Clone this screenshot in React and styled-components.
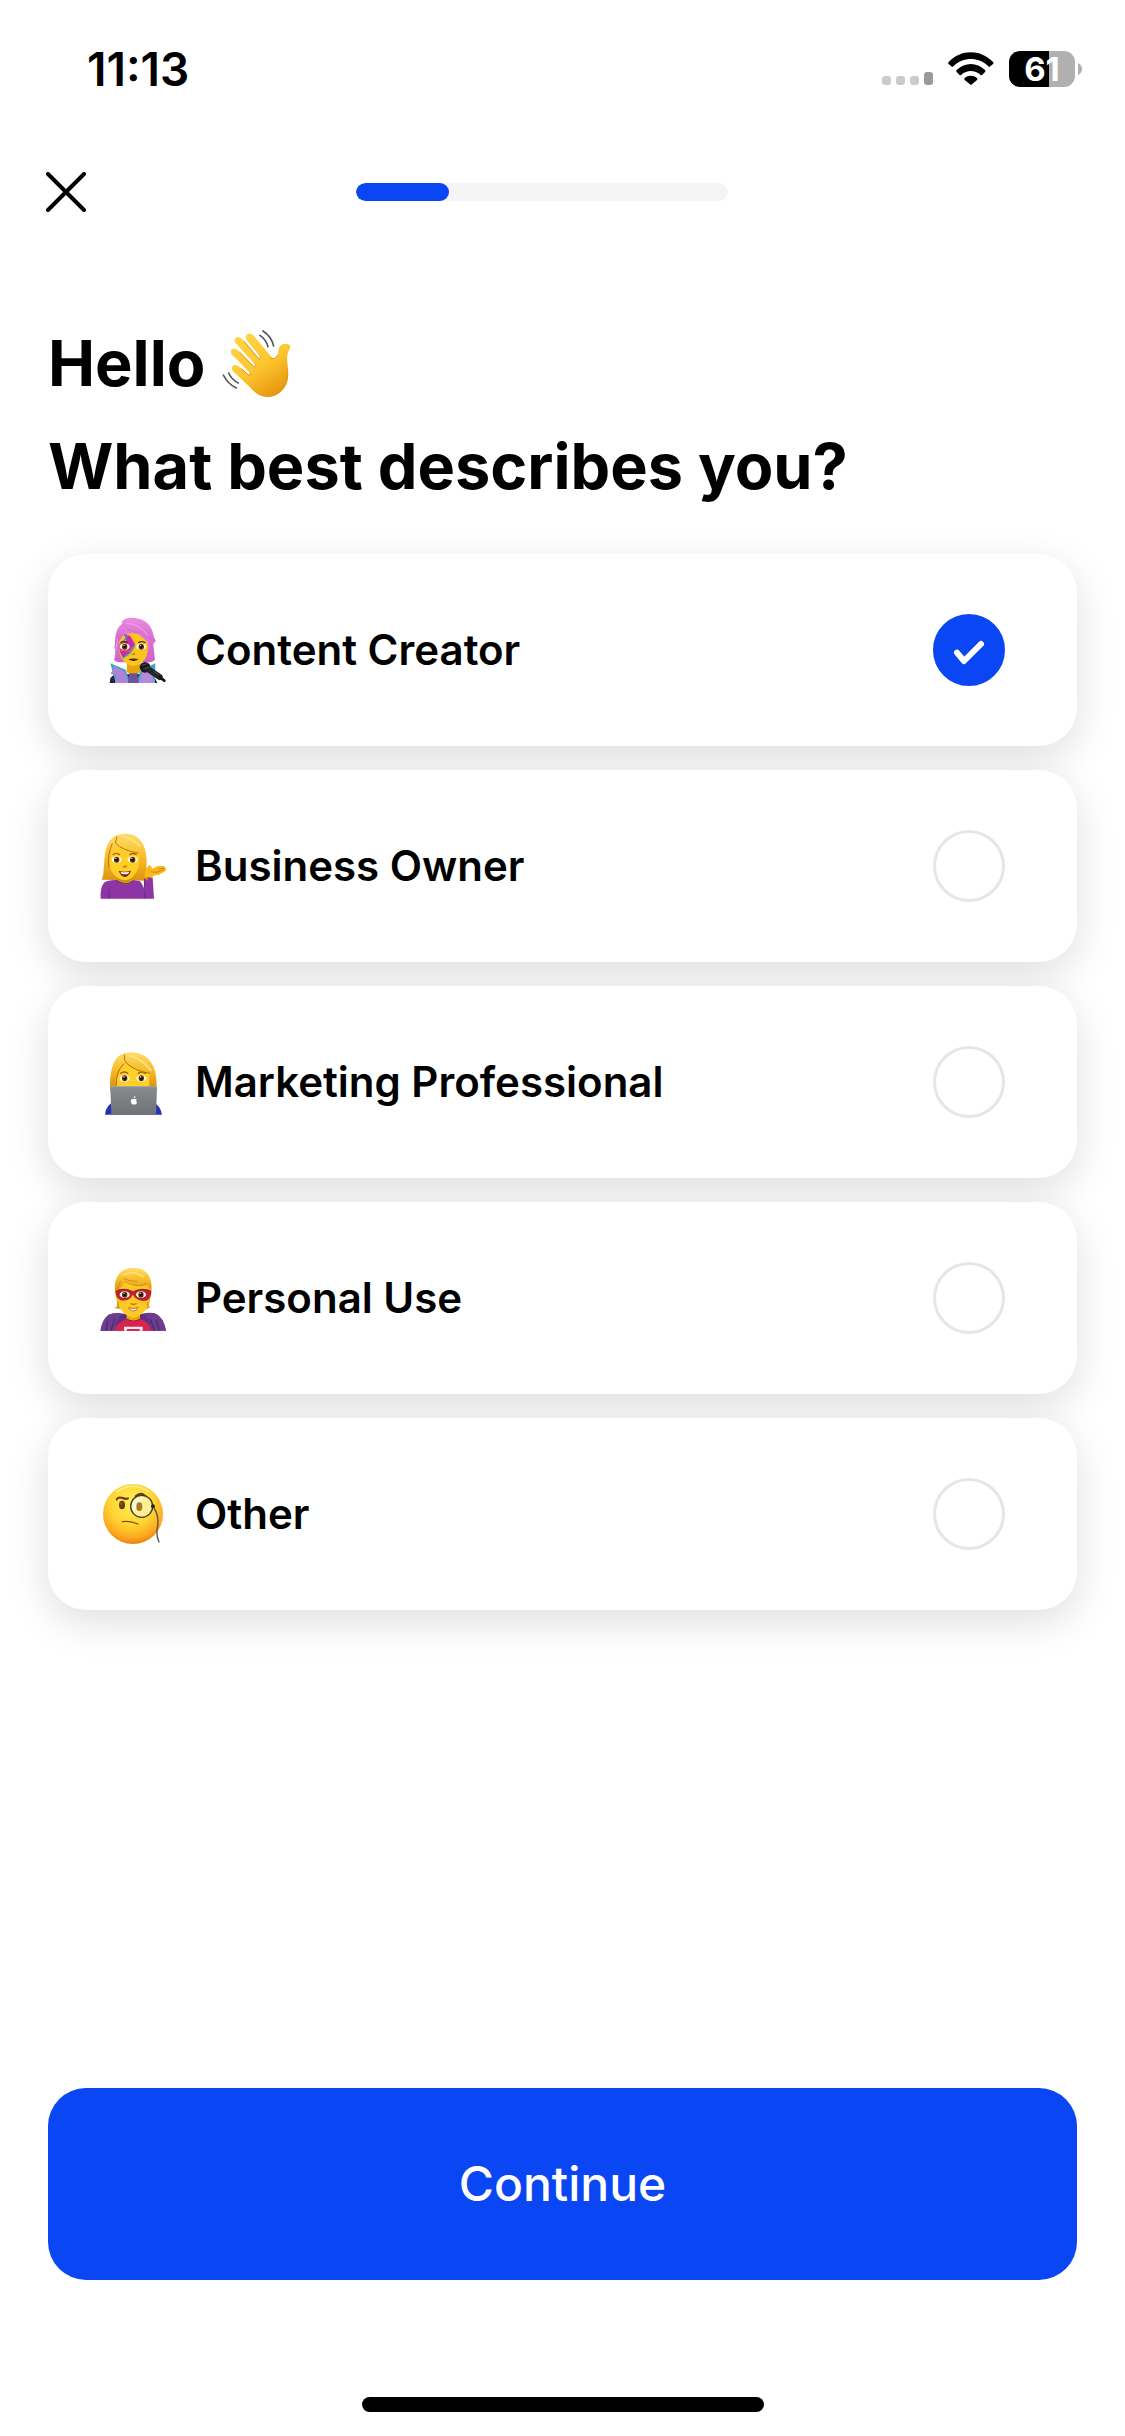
import React, { useState } from "react";
import styled, { createGlobalStyle } from "styled-components";

const BLUE = "#0b46f4";

const GlobalStyle = createGlobalStyle`
  *, *::before, *::after { box-sizing: border-box; }
  body {
    margin: 0;
    background: #fff;
    color: #000;
    font-family: Inter, "Liberation Sans", sans-serif;
  }
`;

const Screen = styled.div`
  display: flex;
  flex-direction: column;
  min-height: 100vh;
`;

const StatusBar = styled.header`
  display: flex;
  align-items: center;
  justify-content: space-between;
  height: 138px;
  padding: 0 43px 0 87px;
`;

const Time = styled.time`
  font-size: 46px;
  line-height: 54px;
  font-weight: 600;
`;

const StatusIcons = styled.div`
  display: flex;
  align-items: center;
  gap: 15px;
`;

const Battery = styled.div`
  display: flex;
  align-items: center;
  gap: 3px;
`;

const BatteryBody = styled.div`
  width: 66px;
  height: 36px;
  border-radius: 11px;
  background: linear-gradient(to right, #000 61%, #b0b0b0 61%);
  color: #fff;
  font-size: 33px;
  line-height: 36px;
  font-weight: 700;
  text-align: center;
`;

const NavBar = styled.nav`
  display: grid;
  grid-template-columns: 48px 1fr 90px;
  align-items: center;
  justify-items: center;
  height: 108px;
  padding: 0 42px;
`;

const CloseButton = styled.button`
  display: grid;
  place-items: center;
  width: 48px;
  height: 48px;
  padding: 0;
  border: 0;
  background: none;
  cursor: pointer;
`;

const Track = styled.div`
  width: 372px;
  max-width: 100%;
  height: 18px;
  border-radius: 9px;
  background: #f5f5f5;
  overflow: hidden;
`;

const Fill = styled.div`
  height: 100%;
  border-radius: 9px;
  background: ${BLUE};
`;

const Form = styled.form`
  display: flex;
  flex-direction: column;
  flex: 1;
  padding: 66px 48px 117px;
`;

const Heading = styled.h1`
  margin: 0 0 36px;
  font-size: 63px;
  line-height: 103px;
  font-weight: 700;
`;

const Greeting = styled.span`
  display: flex;
  align-items: center;
  gap: 16px;
`;

const Options = styled.div`
  display: flex;
  flex-direction: column;
  gap: 24px;
  margin-bottom: 48px;
`;

const Option = styled.label`
  display: flex;
  align-items: center;
  gap: 28px;
  height: 192px;
  padding: 0 72px 0 51px;
  border-radius: 38px;
  background: #fff;
  box-shadow: 0 12px 40px rgba(0, 0, 0, 0.13);
  cursor: pointer;
`;

const OptionText = styled.span`
  flex: 1;
  font-size: 42px;
  line-height: 52px;
  font-weight: 600;
`;

const RadioBox = styled.span`
  display: grid;
  width: 72px;
  height: 72px;

  > * { grid-area: 1 / 1; }
  > svg { pointer-events: none; }
`;

const Radio = styled.input`
  appearance: none;
  width: 72px;
  height: 72px;
  margin: 0;
  border: 3px solid #e6e6e6;
  border-radius: 50%;
  background: #fff;
  cursor: pointer;

  &:checked {
    border-color: ${BLUE};
    background: ${BLUE};
  }
`;

const Continue = styled.button`
  height: 192px;
  margin-top: auto;
  border: 0;
  border-radius: 38px;
  background: ${BLUE};
  color: #fff;
  font-family: inherit;
  font-size: 48px;
  line-height: 58px;
  font-weight: 500;
  cursor: pointer;
`;

const HomeArea = styled.footer`
  display: flex;
  justify-content: center;
  padding-bottom: 24px;
`;

const HomeIndicator = styled.div`
  width: 402px;
  height: 15px;
  border-radius: 8px;
  background: #000;
`;

function Signal() {
  return (
    <svg width="51" height="36" viewBox="0 0 51 36" aria-label="Signal">
      <g fill="#cbcbcb">
        <rect x="0" y="25" width="9" height="9" rx="3" />
        <rect x="14" y="25" width="9" height="9" rx="3" />
        <rect x="28" y="25" width="9" height="9" rx="3" />
      </g>
      <rect x="42" y="21" width="9" height="13" rx="3" fill="#9a9a9a" />
    </svg>
  );
}

function Wifi() {
  return (
    <svg width="46" height="36" viewBox="0 0 138 108" aria-label="Wi-Fi">
      <path d="M2 33C39-6 97-6 135 33Q138 36 135 39L127 46Q124 49 121 46C91 17 46 17 16 46Q13 49 10 46L2 39Q-1 36 2 33Z" />
      <path d="M26 57C50 33 87 33 111 57Q114 60 111 63L103 71Q100 74 97 71C81 56 56 56 40 71Q37 74 34 71L26 63Q23 60 26 57Z" />
      <path d="M50 81C61 72 76 72 87 81Q90 84 87 87L72 100Q69 103 66 100L50 87Q47 84 50 81Z" />
    </svg>
  );
}

function Wave() {
  return (
    <svg width="72" height="72" viewBox="579 52 216 216" role="img" aria-label="Waving hand">
      <defs>
        <linearGradient id="waveSkin" x1="0" y1="0" x2="0.6" y2="1">
          <stop offset="0" stopColor="#ffd84a" />
          <stop offset="0.6" stopColor="#fdc62f" />
          <stop offset="1" stopColor="#e89b12" />
        </linearGradient>
      </defs>
      <path
        fill="url(#waveSkin)"
        d="M654 76C658 66 670 66 677 75L733 142C739 147 746 142 748 134L753 113C756 101 770 96 781 101C788 104 788 110 784 117C775 132 777 146 779 165C784 200 779 220 763 239C745 260 717 264 694 253C684 248 675 239 666 230L615 182C609 174 612 164 620 163C628 162 636 170 641 174L662 193C666 196 670 191 666 187L611 131C605 121 610 113 619 114C625 114 630 119 635 124L678 168C682 171 686 166 682 162L622 97C616 87 622 79 631 79C638 79 643 86 648 91L691 143C696 147 700 142 696 138L656 89C653 84 652 80 654 76Z"
      />
      <g fill="none" stroke="#dc8d14" strokeWidth="3" strokeLinecap="round">
        <path d="M648 92L691 143Q698 148 697 138" />
        <path d="M635 125L678 168Q685 170 683 161" />
        <path d="M641 175L662 193Q669 195 667 187" />
        <path d="M748 135Q743 147 730 143" />
        <path d="M672 235Q719 280 763 237Q782 217 778 177" opacity="0.5" />
      </g>
      <g fill="none" stroke="#555" strokeWidth="5" strokeLinecap="round">
        <path d="M705 61Q730 77 737 106" />
        <path d="M696 74Q714 86 720 108" />
        <path d="M602 187Q611 207 631 217" />
        <path d="M586 193Q600 221 625 232" />
      </g>
    </svg>
  );
}

/* Pair of open eyes shared by the four people. */
function Eyes({ left, right, y }) {
  return [left, right].map((x) => (
    <g key={x}>
      <ellipse cx={x} cy={y} rx="15" ry="10" fill="#fff6dc" />
      <ellipse cx={x} cy={y} rx="8" ry="9" fill="#53300f" />
      <circle cx={x} cy={y} r="4" fill="#150b04" />
      <circle cx={x - 2} cy={y - 4} r="2" fill="#fff" />
    </g>
  ));
}

function Singer() {
  return (
    <svg width="68" height="68" viewBox="57 48 204 204" role="img" aria-label="Singer">
      <defs>
        <linearGradient id="pinkHair" x1="0" y1="0" x2="0" y2="1">
          <stop offset="0" stopColor="#e98bdf" />
          <stop offset="1" stopColor="#d35fc6" />
        </linearGradient>
      </defs>
      <path fill="#262438" d="M89 249L91 235Q96 226 110 223L205 222Q224 225 232 249Z" />
      <path fill="url(#pinkHair)" d="M126 72C122 58 145 51 165 54C198 57 216 79 220 104C223 119 229 119 226 125L220 132Q223 164 225 180Q215 190 195 186L118 187Q106 186 102 180C110 158 103 149 104 140C108 117 102 89 126 72Z" />
      <path fill="#e5a410" d="M141 181H181V217L160 228L140 216Z" />
      <path fill="#fcc51c" d="M118 121Q135 91 177 104L203 126Q206 160 195 177Q179 198 160 198Q138 196 124 174Q114 155 118 121Z" />
      <path fill="#c42baf" d="M132 102L151 108L165 133L151 158L128 173Q116 153 118 133L138 122Z" />
      <path fill="none" stroke="#36a9b7" strokeWidth="4" d="M143 104L131 124M165 137L151 158L129 175" />
      <path fill="none" stroke="#f06a43" strokeWidth="3" d="M122 151L151 154L160 139" />
      <Eyes left={134} right={184} y={140} />
      <path fill="none" stroke="#60300c" strokeWidth="4" strokeLinecap="round" d="M122 128Q131 121 141 128M176 128Q185 122 195 128" />
      <path fill="#c27a0c" d="M154 163Q160 168 166 163L163 158Z" />
      <path fill="#492117" d="M145 178Q160 173 176 178Q161 188 145 178Z" />
      <path fill="url(#pinkHair)" d="M126 74Q143 51 173 57Q210 66 217 106L227 124Q201 121 178 98Q153 100 126 72Q141 92 127 110L104 143Q106 92 126 74Z" />
      <path fill="none" stroke="#c767bf" strokeWidth="2" d="M127 72Q144 98 181 97M112 99L106 141M122 101L113 125M212 121L220 174" />
      <path fill="none" stroke="#f5a3eb" strokeWidth="3" d="M139 70Q178 71 204 107M113 116L107 153" />
      <path fill="#35aac1" d="M91 190L137 209L151 249H107Z" />
      <path fill="#ad83d7" d="M104 199L135 215L146 249H105L109 226L92 222Z" />
      <path fill="#35aac1" d="M226 190L182 211L169 249H225Z" />
      <path fill="#b788dc" d="M211 200L186 217L177 249H225L216 228Z" />
      <path fill="#705199" d="M147 220L172 220L176 249H144Z" />
      <circle cx="195" cy="202" r="16" fill="#17171b" />
      <path stroke="#24242a" strokeWidth="18" strokeLinecap="round" d="M205 208L239 231" />
      <path stroke="#161619" strokeWidth="8" strokeLinecap="round" d="M237 230L253 242" />
      <path fill="none" stroke="#4e4e56" strokeWidth="3" d="M186 196L202 191M189 208L208 200M221 214L235 224" />
    </svg>
  );
}

function BlondeDefs({ id }) {
  return (
    <defs>
      <linearGradient id={id} x1="0" y1="0" x2="0" y2="1">
        <stop offset="0" stopColor="#ffdc69" />
        <stop offset="0.5" stopColor="#f7bd2a" />
        <stop offset="1" stopColor="#dd940d" />
      </linearGradient>
    </defs>
  );
}

function TippingHand() {
  return (
    <svg width="68" height="68" viewBox="57 51 204 204" role="img" aria-label="Person tipping hand">
      <BlondeDefs id="ownerHair" />
      <path fill="url(#ownerHair)" d="M65 194Q73 176 74 140C74 94 89 62 126 58C177 49 203 91 199 150Q198 181 204 197Z" />
      <path fill="#d4930e" d="M115 178H154V210H115Z" />
      <path fill="#8d35a5" d="M62 251Q60 218 72 203Q83 194 112 195Q137 222 159 195L179 198Q193 211 195 239L193 187Q202 182 218 188L222 251Z" />
      <path fill="none" stroke="#6b237f" strokeWidth="3" d="M87 223L88 251M111 197Q139 216 159 197M193 192L195 251" />
      <path fill="#ffcf27" d="M95 110Q127 75 170 111L178 124Q181 164 160 183Q145 197 132 196Q109 191 95 170Q84 147 95 110Z" />
      <Eyes left={110} right={158} y={134} />
      <path fill="none" stroke="#a95c0c" strokeWidth="4" strokeLinecap="round" d="M99 119Q108 111 119 119M149 119Q158 112 169 119" />
      <path fill="#ce850a" d="M126 156Q134 161 142 156L137 150Z" />
      <path fill="#74270e" d="M116 167Q134 173 153 167Q147 185 135 186Q122 184 116 167Z" />
      <path fill="#fff" d="M121 170Q134 174 148 170L145 176Q134 179 124 176Z" />
      <path fill="url(#ownerHair)" d="M126 58C95 59 78 87 74 130L70 173Q82 174 87 161Q83 128 111 91Q137 107 177 114Q180 150 183 183L204 197Q197 170 199 140C201 83 165 49 126 58Z" />
      <path fill="none" stroke="#ba7312" strokeWidth="3" d="M111 64L106 84Q127 107 176 114M97 85Q82 119 86 157" />
      <path fill="none" stroke="#ffe489" strokeWidth="5" d="M127 65Q160 71 181 95" />
      <path fill="#f9b91b" d="M194 186Q192 169 203 156Q206 147 212 153L218 161Q232 150 249 153Q259 154 255 160Q264 161 252 171L235 180Q218 179 217 188Z" />
      <path fill="none" stroke="#d9850d" strokeWidth="3" d="M213 170Q231 176 253 163M236 162L254 159" />
    </svg>
  );
}

function LaptopUser() {
  return (
    <svg width="68" height="68" viewBox="57 39 204 204" role="img" aria-label="Person with laptop">
      <BlondeDefs id="laptopHair" />
      <defs>
        <linearGradient id="laptopLid" x1="0" y1="0" x2="0" y2="1">
          <stop offset="0" stopColor="#898b8d" />
          <stop offset="1" stopColor="#707376" />
        </linearGradient>
      </defs>
      <path fill="#2730b9" d="M75 239Q77 209 103 201H219Q242 212 246 239Z" />
      <path fill="url(#laptopHair)" d="M91 171Q86 120 101 85C114 50 159 46 187 60C223 77 235 121 228 174Z" />
      <path fill="#ffd02a" d="M111 109Q141 65 193 99L214 116V157H111Z" />
      <Eyes left={134} right={184} y={130} />
      <path fill="none" stroke="#a75b0c" strokeWidth="4" strokeLinecap="round" d="M122 115Q132 107 143 115M175 115Q184 107 196 115" />
      <path fill="url(#laptopHair)" d="M134 55C101 64 94 98 91 153H108Q109 119 134 83Q166 111 208 113V154H229C230 77 190 43 134 55Z" />
      <path fill="none" stroke="#b76f12" strokeWidth="3" d="M133 59Q133 80 139 84Q166 109 210 115M132 86Q107 109 109 151" />
      <path fill="none" stroke="#ffe388" strokeWidth="5" d="M147 61Q189 73 214 108" />
      <path fill="url(#laptopLid)" d="M91 157Q91 153 96 153H226Q231 153 231 158L228 239H94Z" />
      <path fill="none" stroke="#a5a7a9" strokeWidth="3" d="M94 155H228" />
      <path fill="#fff" d="M162 193Q168 189 170 193Q166 199 171 203Q167 211 162 208Q156 211 153 202Q151 192 158 192ZM161 190Q161 184 166 183Q167 190 161 190Z" />
    </svg>
  );
}

function Superhero() {
  return (
    <svg width="68" height="68" viewBox="57 42 204 204" role="img" aria-label="Superhero">
      <BlondeDefs id="heroHair" />
      <path fill="#5c3185" d="M61 242Q67 208 86 194Q103 186 132 191L187 191Q222 183 237 198Q253 213 258 242Z" />
      <path fill="#e5a512" d="M140 179H180V218H140Z" />
      <path fill="#d9234f" d="M103 242Q106 220 139 207Q160 220 182 207Q207 215 216 242Z" />
      <path fill="none" stroke="#a11748" strokeWidth="3" d="M140 207Q160 219 181 207" />
      <path fill="#fcecee" d="M132 230H188V242H179V237H141V242H132Z" />
      <path fill="url(#heroHair)" d="M105 128C101 84 119 56 158 54C202 52 221 89 213 135L204 176Q193 180 181 163L134 164Q122 182 108 174Q116 167 105 128Z" />
      <path fill="#ffc923" d="M111 119Q157 70 207 119Q210 155 200 177Q178 201 160 204Q138 200 121 176Q108 153 111 119Z" />
      <path fill="#bf2034" d="M106 121Q136 110 159 124Q184 110 214 122Q214 140 204 150Q183 158 165 143L158 134Q149 155 122 151Q107 145 106 121Z" />
      <Eyes left={134} right={183} y={134} />
      <path fill="none" stroke="#831a2b" strokeWidth="2" d="M108 122Q135 113 157 125M163 125Q187 114 211 123" />
      <path fill="none" stroke="#c77e0e" strokeWidth="4" strokeLinecap="round" d="M153 161Q160 166 168 161" />
      <path fill="#fff4e0" stroke="#954617" strokeWidth="2" d="M146 173Q161 180 174 172Q169 185 159 183Q148 182 146 173Z" />
      <path fill="url(#heroHair)" d="M105 123C102 84 120 53 160 54C202 55 219 85 213 123L202 104Q181 115 151 99L134 93Q130 110 108 123Z" />
      <path fill="none" stroke="#cf8d1c" strokeWidth="3" d="M131 85Q149 95 171 94M134 94Q174 117 199 101M121 93Q119 108 109 118" />
      <path fill="none" stroke="#ffe48c" strokeWidth="4" d="M131 75Q160 58 191 81" />
      <path fill="none" stroke="#df9414" strokeWidth="4" d="M113 155Q119 172 106 174M204 155Q200 169 209 172" />
      <path fill="#6d3c90" d="M86 194Q105 187 125 193Q113 204 101 242H62Q67 207 86 194ZM193 194Q210 184 228 193Q250 201 258 242H217Q211 211 193 194Z" />
      <path fill="none" stroke="#4d2b70" strokeWidth="4" d="M83 212L78 242M104 206L93 242M228 210L238 242M211 208L224 242" />
    </svg>
  );
}

function Monocle() {
  return (
    <svg width="68" height="68" viewBox="57 45 204 204" role="img" aria-label="Face with monocle">
      <defs>
        <radialGradient id="monocleFace" cx="0.48" cy="0.32" r="0.68">
          <stop offset="0" stopColor="#fff15a" />
          <stop offset="0.55" stopColor="#ffd332" />
          <stop offset="0.86" stopColor="#fda51d" />
          <stop offset="1" stopColor="#e98014" />
        </radialGradient>
      </defs>
      <circle cx="159" cy="147" r="90" fill="url(#monocleFace)" />
      <path fill="none" stroke="#fff08f" strokeWidth="5" strokeLinecap="round" d="M111 80Q157 48 205 79" />
      <ellipse cx="126" cy="120" rx="9" ry="13" fill="#6b3b0d" />
      <ellipse cx="124" cy="116" rx="3" ry="5" fill="#936020" />
      <path fill="none" stroke="#663510" strokeWidth="6" strokeLinecap="round" d="M110 103Q116 94 128 99Q138 103 144 100M167 94Q183 79 197 94" />
      <circle cx="185" cy="124" r="33" fill="#fff9ba" fillOpacity="0.68" stroke="#403e30" strokeWidth="4" />
      <path fill="#fff" opacity="0.55" d="M158 117Q166 96 190 97L163 143Q156 131 158 117Z" />
      <ellipse cx="178" cy="125" rx="9" ry="13" fill="#a7782e" />
      <path fill="none" stroke="#89500c" strokeWidth="4" strokeLinecap="round" d="M127 170Q150 166 174 177" />
      <circle cx="219" cy="124" r="6" fill="#26231b" />
      <path fill="none" stroke="#55544f" strokeWidth="4" strokeLinecap="round" d="M222 129Q237 150 233 183Q227 210 237 231" />
    </svg>
  );
}

const OPTIONS = [
  { label: "Content Creator", Icon: Singer },
  { label: "Business Owner", Icon: TippingHand },
  { label: "Marketing Professional", Icon: LaptopUser },
  { label: "Personal Use", Icon: Superhero },
  { label: "Other", Icon: Monocle },
];

export default function App() {
  const [selected, setSelected] = useState("Content Creator");
  const progress = 25;

  return (
    <>
      <GlobalStyle />
      <Screen>
        <StatusBar>
          <Time>11:13</Time>
          <StatusIcons>
            <Signal />
            <Wifi />
            <Battery>
              <BatteryBody>61</BatteryBody>
              <svg width="4" height="12" viewBox="0 0 4 12" aria-hidden="true">
                <path d="M0 0Q4 2 4 6T0 12Z" fill="#b0b0b0" />
              </svg>
            </Battery>
          </StatusIcons>
        </StatusBar>
        <NavBar>
          <CloseButton type="button" aria-label="Close">
            <svg width="40" height="40" viewBox="0 0 40 40" aria-hidden="true">
              <path d="M2 2L38 38M38 2L2 38" stroke="#000" strokeWidth="4" strokeLinecap="round" />
            </svg>
          </CloseButton>
          <Track role="progressbar" aria-label="Setup progress" aria-valuenow={progress}>
            <Fill style={{ width: `${progress}%` }} />
          </Track>
        </NavBar>
        <Form onSubmit={(event) => event.preventDefault()}>
          <Heading id="question">
            <Greeting>
              Hello <Wave />
            </Greeting>
            What best describes you?
          </Heading>
          <Options role="radiogroup" aria-labelledby="question">
            {OPTIONS.map(({ label, Icon }) => (
              <Option key={label}>
                <Icon />
                <OptionText>{label}</OptionText>
                <RadioBox>
                  <Radio
                    type="radio"
                    name="role"
                    value={label}
                    checked={selected === label}
                    onChange={() => setSelected(label)}
                  />
                  {selected === label && (
                    <svg width="72" height="72" viewBox="0 0 216 216" aria-hidden="true">
                      <path
                        d="M72 116L93 141L144 90"
                        fill="none"
                        stroke="#fff"
                        strokeWidth="18"
                        strokeLinecap="round"
                        strokeLinejoin="round"
                      />
                    </svg>
                  )}
                </RadioBox>
              </Option>
            ))}
          </Options>
          <Continue type="submit">Continue</Continue>
        </Form>
        <HomeArea>
          <HomeIndicator />
        </HomeArea>
      </Screen>
    </>
  );
}
